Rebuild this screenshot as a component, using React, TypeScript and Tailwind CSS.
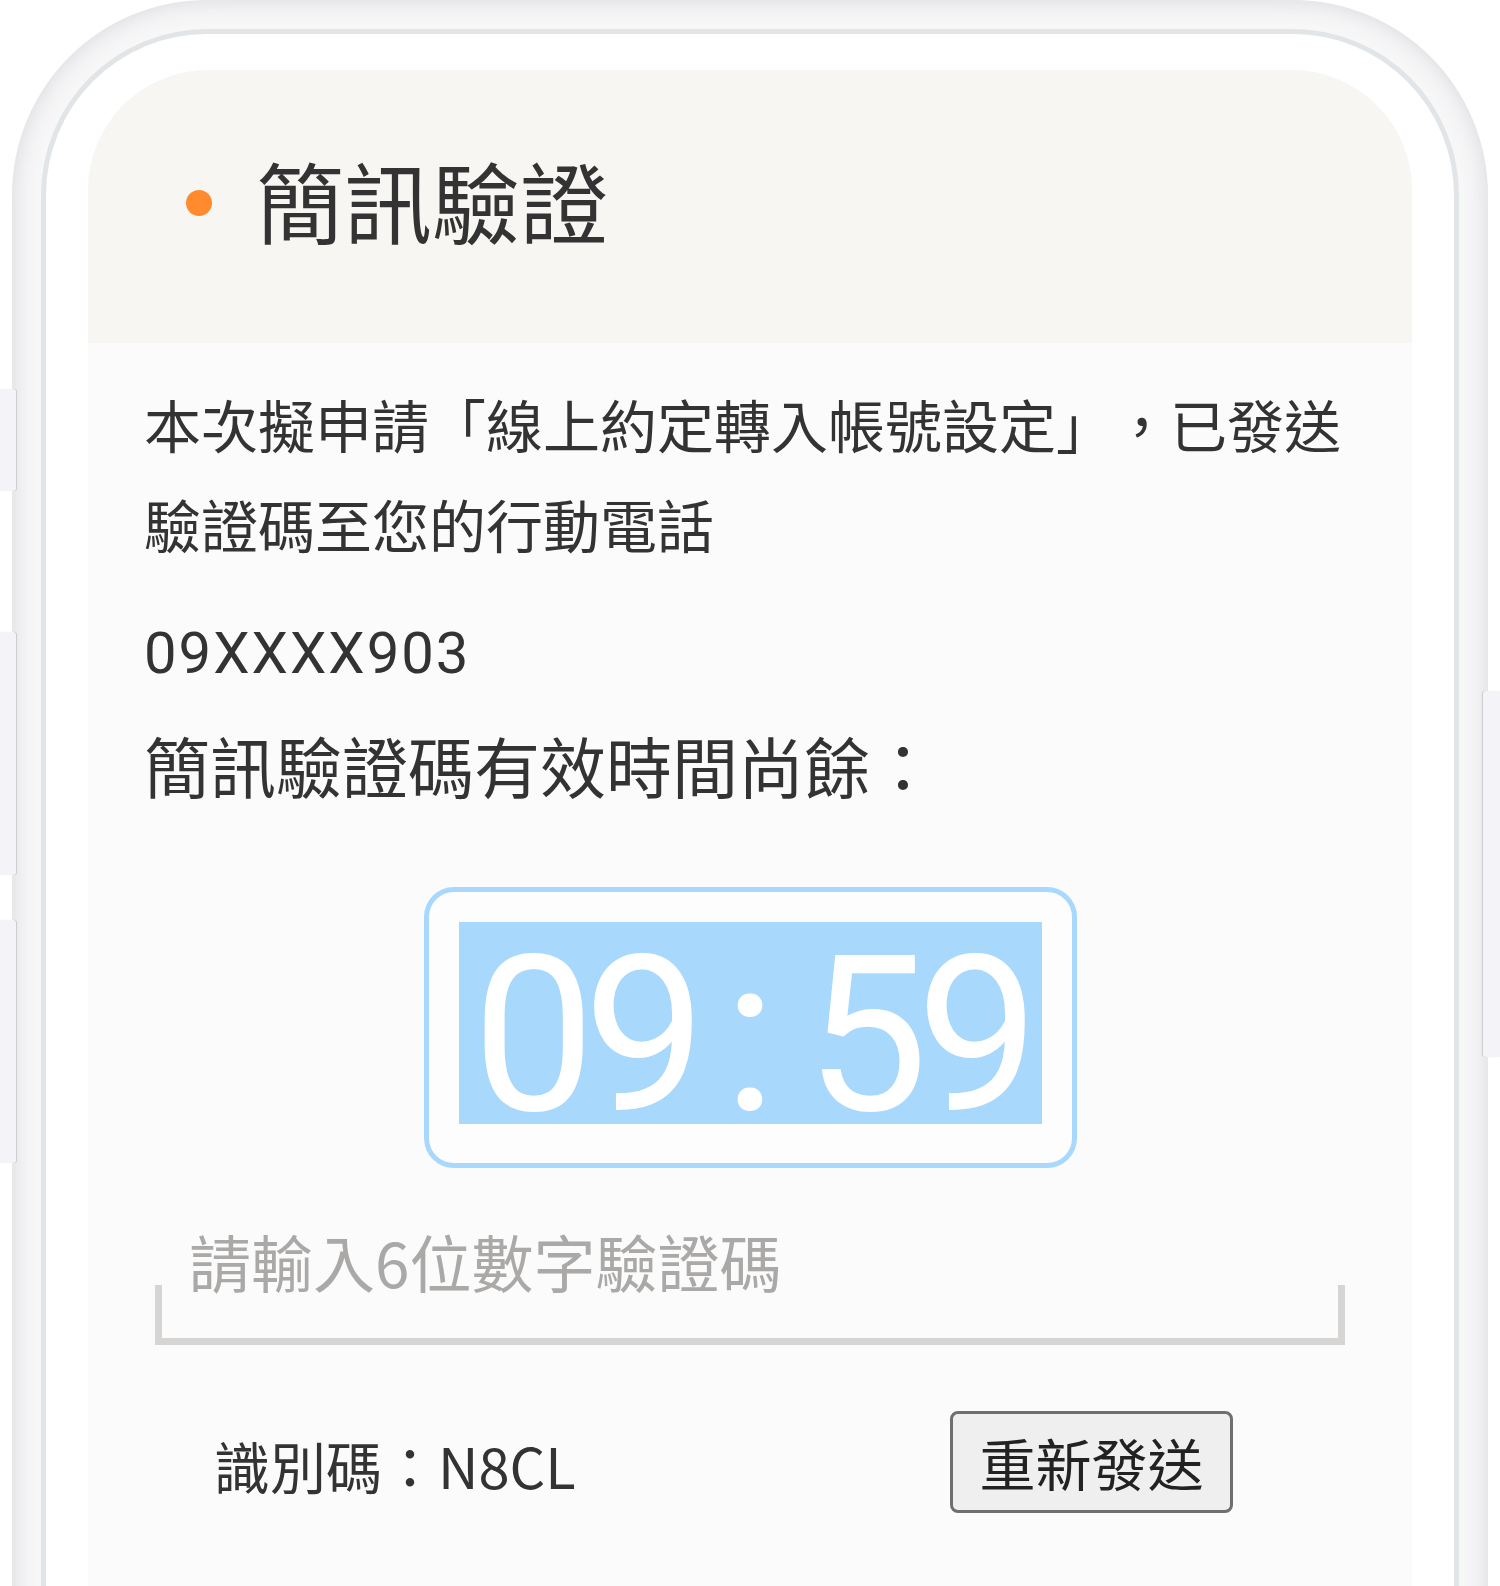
import React from 'react';

const digits = ['0', '9', ':', '5', '9'];

export default function App() {
    return (
        <div className="relative h-[1586px] w-[1500px] overflow-hidden bg-white font-['Noto_Sans_CJK_TC','Noto_Sans',sans-serif] text-[#333333]">
            {/* side buttons */}
            <div className="absolute left-0 top-[389px] z-10 h-[102px] w-[16px] rounded-r-[3px] bg-[#f4f4f8] shadow-[1px_0_1px_rgba(0,0,0,0.14)]" />
            <div className="absolute left-0 top-[632px] z-10 h-[243px] w-[16px] rounded-r-[3px] bg-[#f4f4f8] shadow-[1px_0_1px_rgba(0,0,0,0.14)]" />
            <div className="absolute left-0 top-[920px] z-10 h-[243px] w-[16px] rounded-r-[3px] bg-[#f4f4f8] shadow-[1px_0_1px_rgba(0,0,0,0.14)]" />
            <div className="absolute right-0 top-[691px] z-10 h-[366px] w-[17px] rounded-l-[3px] bg-[#f4f4f8] shadow-[-1px_0_1px_rgba(0,0,0,0.14)]" />

            {/* phone frame */}
            <div className="mx-[12px] h-[1700px] rounded-t-[195px] bg-[#f7f7f8] p-[29px] shadow-[inset_0_0_24px_rgba(70,70,100,0.18)]">
                <div className="h-full rounded-t-[166px] border-[5px] border-b-0 border-[#e2e5e7] bg-white px-[42px] pt-[36px]">
                    <div className="h-full overflow-hidden rounded-t-[120px] bg-[#fbfbfb]">
                        {/* header */}
                        <div className="flex h-[273px] items-center bg-[#f7f6f3] pl-[98px]">
                            <div className="mb-[7px] h-[26px] w-[26px] rounded-full bg-[#ff8b2e]" />
                            <h1 className="mb-[16px] ml-[44px] text-[88px] leading-none text-[#333333]">簡訊驗證</h1>
                        </div>

                        {/* body */}
                        <div className="px-[56px]">
                            <p className="mt-[30px] text-[57px] leading-[100px] [text-spacing-trim:space-all]">
                                本次擬申請「線上約定轉入帳號設定」，已發送驗證碼至您的行動電話
                            </p>
                            <p className="mt-[40px] font-['Roboto',sans-serif] text-[58px] leading-[80px] tracking-[2px]">09XXXX903</p>
                            <p className="mt-[26px] text-[66px] leading-[90px]">簡訊驗證碼有效時間尚餘：</p>

                            <div className="mx-auto mt-[78px] h-[281px] w-[653px] rounded-[30px] border-[5px] border-[#a8d8fd] bg-[#fdfdfd] px-[30px] pt-[30px]">
                                <div className="flex h-[202px] justify-center bg-[#a8d8fc] font-['Roboto',sans-serif] text-[218px] leading-[228px] text-white">
                                    {digits.map((d, i) => (
                                        <span key={i} className="w-[111px] text-center">{d}</span>
                                    ))}
                                </div>
                            </div>

                            <div className="mx-[11px] mt-[53px]">
                                <input
                                    placeholder="請輸入6位數字驗證碼"
                                    className="block h-[80px] w-full bg-transparent pl-[34px] text-[62px] leading-[80px] outline-none placeholder:text-[#aaa9a7]"
                                />
                                <div className="-mt-[16px] h-[60px] border-x-[7px] border-b-[7px] border-[#d6d5d3]" />
                            </div>

                            <div className="mt-[66px] flex items-center justify-between pl-[70px] pr-[123px]">
                                <span className="pt-[6px] text-[56px] leading-[80px]">識別碼：N8CL</span>
                                <button className="h-[102px] w-[283px] rounded-[8px] border-[3px] border-[#6f6f6f] bg-[#efefef] text-[56px] leading-none text-[#222222]">
                                    重新發送
                                </button>
                            </div>
                        </div>
                    </div>
                </div>
            </div>
        </div>
    );
}
